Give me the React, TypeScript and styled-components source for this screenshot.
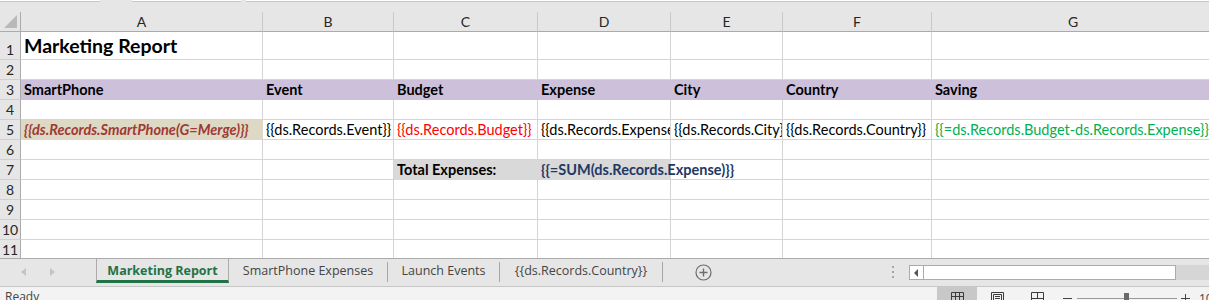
import React from 'react';
import styled, { createGlobalStyle } from 'styled-components';

const GlobalStyle = createGlobalStyle`
  html, body { margin: 0; padding: 0; background: #e6e6e6; }
  body { font-family: Lato, "Liberation Sans", sans-serif; }
`;

const COLS = [242, 131, 144, 133, 112, 149, 283];
const LETTERS = ['A', 'B', 'C', 'D', 'E', 'F', 'G'];
const ROW_HEIGHTS = [28, 20, 20, 20, 20, 20, 20, 20, 20, 20, 20];

interface ICell {
  text?: string;
  fill?: string;
  color?: string;
  bold?: boolean;
  italic?: boolean;
  size?: number;
  spill?: boolean;
  noRight?: boolean;
}

const PURPLE = '#ccc0da';
const heading = (text: string): ICell => ({ text, fill: PURPLE, bold: true });

const sheet: Record<number, Record<number, ICell>> = {
  1: { 0: { text: 'Marketing Report', bold: true, size: 19.5 } },
  3: {
    0: heading('SmartPhone'),
    1: heading('Event'),
    2: heading('Budget'),
    3: heading('Expense'),
    4: heading('City'),
    5: heading('Country'),
    6: heading('Saving'),
  },
  5: {
    0: { text: '{{ds.Records.SmartPhone(G=Merge)}}', fill: '#ddd9c4', color: '#a03a35', bold: true, italic: true },
    1: { text: '{{ds.Records.Event}}' },
    2: { text: '{{ds.Records.Budget}}', color: '#ff0000' },
    3: { text: '{{ds.Records.Expense}}' },
    4: { text: '{{ds.Records.City}}' },
    5: { text: '{{ds.Records.Country}}' },
    6: { text: '{{=ds.Records.Budget-ds.Records.Expense}}', color: '#00b050' },
  },
  7: {
    2: { text: 'Total Expenses:', fill: '#d9d9d9', bold: true },
    3: { text: '{{=SUM(ds.Records.Expense)}}', fill: '#d9d9d9', color: '#1f3864', bold: true, spill: true, noRight: true },
  },
};

function App() {
  return (
    <Window>
      <GlobalStyle />
      <FormulaStrip>
        <FormulaBox $w={100} />
        <FormulaGap $w={32} />
        <FormulaBox $w={109} />
        <FormulaGap $w={5} />
        <FormulaBox $w={963} />
      </FormulaStrip>

      <Sheet>
        <Corner>
          <svg width="13" height="13" viewBox="0 0 13 13">
            <polygon points="13,0 13,13 0,13" fill="#b9b9b9" />
          </svg>
        </Corner>
        {LETTERS.map(l => (
          <ColHeader key={l}>{l}</ColHeader>
        ))}
        {ROW_HEIGHTS.map((_, r) => {
          const rowNo = r + 1;
          const rowCells = sheet[rowNo] || {};
          return (
            <React.Fragment key={rowNo}>
              <RowHeader>{rowNo}</RowHeader>
              {COLS.map((_, c) => {
                const cell = rowCells[c] || {};
                return (
                  <Cell
                    key={c}
                    $fill={cell.fill}
                    $color={cell.color}
                    $bold={cell.bold}
                    $italic={cell.italic}
                    $size={cell.size}
                    $spill={cell.spill}
                    $noRight={cell.noRight}
                  >
                    {cell.text}
                  </Cell>
                );
              })}
            </React.Fragment>
          );
        })}
      </Sheet>

      <TabBar>
        <TabNav>
          <NavArrow viewBox="0 0 6 8" width="6" height="8">
            <polygon points="5,0 5,8 0,4" fill="#c4c4c4" />
          </NavArrow>
          <NavArrow viewBox="0 0 6 8" width="6" height="8">
            <polygon points="1,0 1,8 6,4" fill="#c4c4c4" />
          </NavArrow>
        </TabNav>
        <Tab $w={133} $active>
          Marketing Report
        </Tab>
        <Tab $w={158}>SmartPhone Expenses</Tab>
        <TabDivider />
        <Tab $w={111}>Launch Events</Tab>
        <TabDivider />
        <Tab $w={162}>{'{{ds.Records.Country}}'}</Tab>
        <TabDivider />
        <AddSheet>
          <svg width="17" height="17" viewBox="0 0 17 17">
            <circle cx="8.5" cy="8.5" r="7.5" fill="none" stroke="#6d6d6d" strokeWidth="1.2" />
            <path d="M8.5 4.5v8M4.5 8.5h8" stroke="#6d6d6d" strokeWidth="1.4" />
          </svg>
        </AddSheet>
        <Spacer />
        <Grip>
          <svg width="3" height="12" viewBox="0 0 3 12">
            <rect x="0" y="0" width="2" height="2" fill="#a6a6a6" />
            <rect x="0" y="5" width="2" height="2" fill="#a6a6a6" />
            <rect x="0" y="10" width="2" height="2" fill="#a6a6a6" />
          </svg>
        </Grip>
        <HScroll>
          <ScrollButton>
            <svg width="5" height="8" viewBox="0 0 5 8">
              <polygon points="4,0 4,8 0,4" fill="#555" />
            </svg>
          </ScrollButton>
        </HScroll>
        <ScrollRest />
      </TabBar>

      <StatusBar>
        <StatusText>Ready</StatusText>
        <ViewButton $active>
          <svg width="13" height="13" viewBox="0 0 13 13">
            <path d="M0.5 0.5h12v12h-12zM0.5 4.5h12M0.5 8.5h12M4.5 0.5v12M8.5 0.5v12" fill="none" stroke="#3c3c3c" />
          </svg>
        </ViewButton>
        <ViewButton>
          <svg width="13" height="13" viewBox="0 0 13 13">
            <path d="M0.5 0.5h12v12h-12zM2.5 2.5h8v8h-8zM4 4.5h5M4 6.5h5M4 8.5h5" fill="none" stroke="#3c3c3c" />
          </svg>
        </ViewButton>
        <ViewButton>
          <svg width="13" height="13" viewBox="0 0 13 13">
            <path d="M0.5 12.5V0.5h12v12M6.5 0.5v6M0.5 6.5h12" fill="none" stroke="#3c3c3c" />
          </svg>
        </ViewButton>
        <ZoomSlider width="128" height="12" viewBox="0 0 128 12">
          <path d="M1 6.5h9" stroke="#444" strokeWidth="1" />
          <path d="M15 6.5h100" stroke="#9a9a9a" strokeWidth="1" />
          <rect x="62" y="1" width="5" height="11" fill="#6a6a6a" />
          <path d="M119 6.5h9M123.5 2v9" stroke="#444" strokeWidth="1" />
        </ZoomSlider>
        <ZoomText>100%</ZoomText>
      </StatusBar>
    </Window>
  );
}

export default App;

const Window = styled.div`
  width: 1209px;
  height: 300px;
  overflow: hidden;
  background: #e6e6e6;
  display: flex;
  flex-direction: column;
`;

const FormulaStrip = styled.div`
  display: flex;
  height: 12px;
  flex: 0 0 12px;
  align-items: flex-start;
`;

const FormulaBox = styled.div<{ $w: number }>`
  width: ${p => p.$w}px;
  flex: 0 0 auto;
  height: 1px;
  background: #ffffff;
  border-bottom: 1px solid #c6c6c6;
`;

const FormulaGap = styled.div<{ $w: number }>`
  width: ${p => p.$w}px;
  flex: 0 0 auto;
`;

const Sheet = styled.div`
  flex: 0 0 246px;
  height: 246px;
  overflow: hidden;
  display: grid;
  grid-template-columns: 21px ${COLS.map(w => `${w}px`).join(' ')};
  grid-template-rows: 20px ${ROW_HEIGHTS.map(h => `${h}px`).join(' ')};
  background: #ffffff;
  font-family: Lato, "Liberation Sans", sans-serif;
`;

const Corner = styled.div`
  box-sizing: border-box;
  background: #e6e6e6;
  border-right: 1px solid #ababab;
  border-bottom: 1px solid #ababab;
  display: flex;
  align-items: flex-end;
  justify-content: flex-end;
  padding: 0 3px 3px 0;
`;

const ColHeader = styled.div`
  box-sizing: border-box;
  background: #e6e6e6;
  border-right: 1px solid #c9c9c9;
  border-bottom: 1px solid #ababab;
  display: flex;
  align-items: center;
  justify-content: center;
  font-size: 14px;
  color: #262626;
`;

const RowHeader = styled.div`
  box-sizing: border-box;
  background: #e6e6e6;
  border-right: 1px solid #ababab;
  border-bottom: 1px solid #d0d0d0;
  display: flex;
  align-items: flex-end;
  justify-content: center;
  padding-bottom: 1px;
  font-size: 14px;
  line-height: 17px;
  color: #262626;
`;

const Cell = styled.div<{
  $fill?: string;
  $color?: string;
  $bold?: boolean;
  $italic?: boolean;
  $size?: number;
  $spill?: boolean;
  $noRight?: boolean;
}>`
  box-sizing: border-box;
  min-width: 0;
  background: ${p => p.$fill || 'transparent'};
  border-right: 1px solid ${p => (p.$noRight ? 'transparent' : p.$fill || '#d4d4d4')};
  border-bottom: 1px solid ${p => p.$fill || '#d4d4d4'};
  display: flex;
  align-items: flex-end;
  padding: 0 0 1px 3px;
  white-space: nowrap;
  overflow: ${p => (p.$spill ? 'visible' : 'hidden')};
  font-size: ${p => p.$size || 14.5}px;
  line-height: ${p => (p.$size ? 24 : 17)}px;
  font-weight: ${p => (p.$bold ? 700 : 400)};
  font-style: ${p => (p.$italic ? 'italic' : 'normal')};
  color: ${p => p.$color || '#000000'};
`;

const TabBar = styled.div`
  flex: 0 0 29px;
  box-sizing: border-box;
  height: 29px;
  border-top: 1px solid #ababab;
  border-bottom: 1px solid #c6c6c6;
  display: flex;
  align-items: flex-start;
  background: #e6e6e6;
  font-family: "Open Sans", "Noto Sans", sans-serif;
`;

const TabNav = styled.div`
  width: 96px;
  flex: 0 0 96px;
  height: 26px;
  display: flex;
  align-items: center;
  padding-left: 21px;
  gap: 22px;
  box-sizing: border-box;
`;

const NavArrow = styled.svg`
  display: block;
`;

const Tab = styled.div<{ $w: number; $active?: boolean }>`
  box-sizing: border-box;
  width: ${p => p.$w}px;
  flex: 0 0 auto;
  height: 24px;
  display: flex;
  align-items: center;
  justify-content: center;
  font-size: 12.5px;
  white-space: nowrap;
  color: ${p => (p.$active ? '#217346' : '#444444')};
  font-weight: ${p => (p.$active ? 700 : 400)};
  border-left: ${p => (p.$active ? '1px solid #ababab' : 'none')};
  border-right: ${p => (p.$active ? '1px solid #ababab' : 'none')};
  border-bottom: 3px solid ${p => (p.$active ? '#217346' : 'transparent')};
  padding-top: 2px;
`;

const TabDivider = styled.div`
  width: 1px;
  flex: 0 0 1px;
  height: 20px;
  margin-top: 3px;
  background: #a6a6a6;
`;

const AddSheet = styled.div`
  margin-left: 32px;
  height: 26px;
  display: flex;
  align-items: center;
`;

const Spacer = styled.div`
  flex: 1;
`;

const Grip = styled.div`
  height: 26px;
  display: flex;
  align-items: center;
  margin-right: 14px;
`;

const HScroll = styled.div`
  box-sizing: border-box;
  width: 267px;
  flex: 0 0 267px;
  height: 15px;
  margin-top: 6px;
  background: #ffffff;
  border: 1px solid #ababab;
  display: flex;
`;

const ScrollButton = styled.div`
  width: 13px;
  height: 13px;
  border-right: 1px solid #ababab;
  display: flex;
  align-items: center;
  justify-content: center;
`;

const ScrollRest = styled.div`
  width: 33px;
  flex: 0 0 33px;
  height: 15px;
  margin-top: 6px;
  background: #d6d6d6;
`;

const StatusBar = styled.div`
  flex: 0 0 24px;
  height: 24px;
  background: #f3f3f3;
  display: flex;
  align-items: flex-start;
  font-family: "Open Sans", "Noto Sans", sans-serif;
`;

const StatusText = styled.div`
  width: 937px;
  flex: 0 0 937px;
  box-sizing: border-box;
  padding: 2px 0 0 5px;
  font-size: 12px;
  line-height: 16px;
  color: #444444;
`;

const ViewButton = styled.div<{ $active?: boolean }>`
  width: 40px;
  flex: 0 0 40px;
  height: 24px;
  background: ${p => (p.$active ? '#c8c8c8' : 'transparent')};
  display: flex;
  justify-content: center;
  padding-top: 5px;
  box-sizing: border-box;
`;

const ZoomSlider = styled.svg`
  display: block;
  margin: 5px 0 0 5px;
  flex: 0 0 auto;
`;

const ZoomText = styled.div`
  margin-left: 9px;
  padding-top: 3px;
  font-size: 12px;
  color: #444444;
  white-space: nowrap;
`;
